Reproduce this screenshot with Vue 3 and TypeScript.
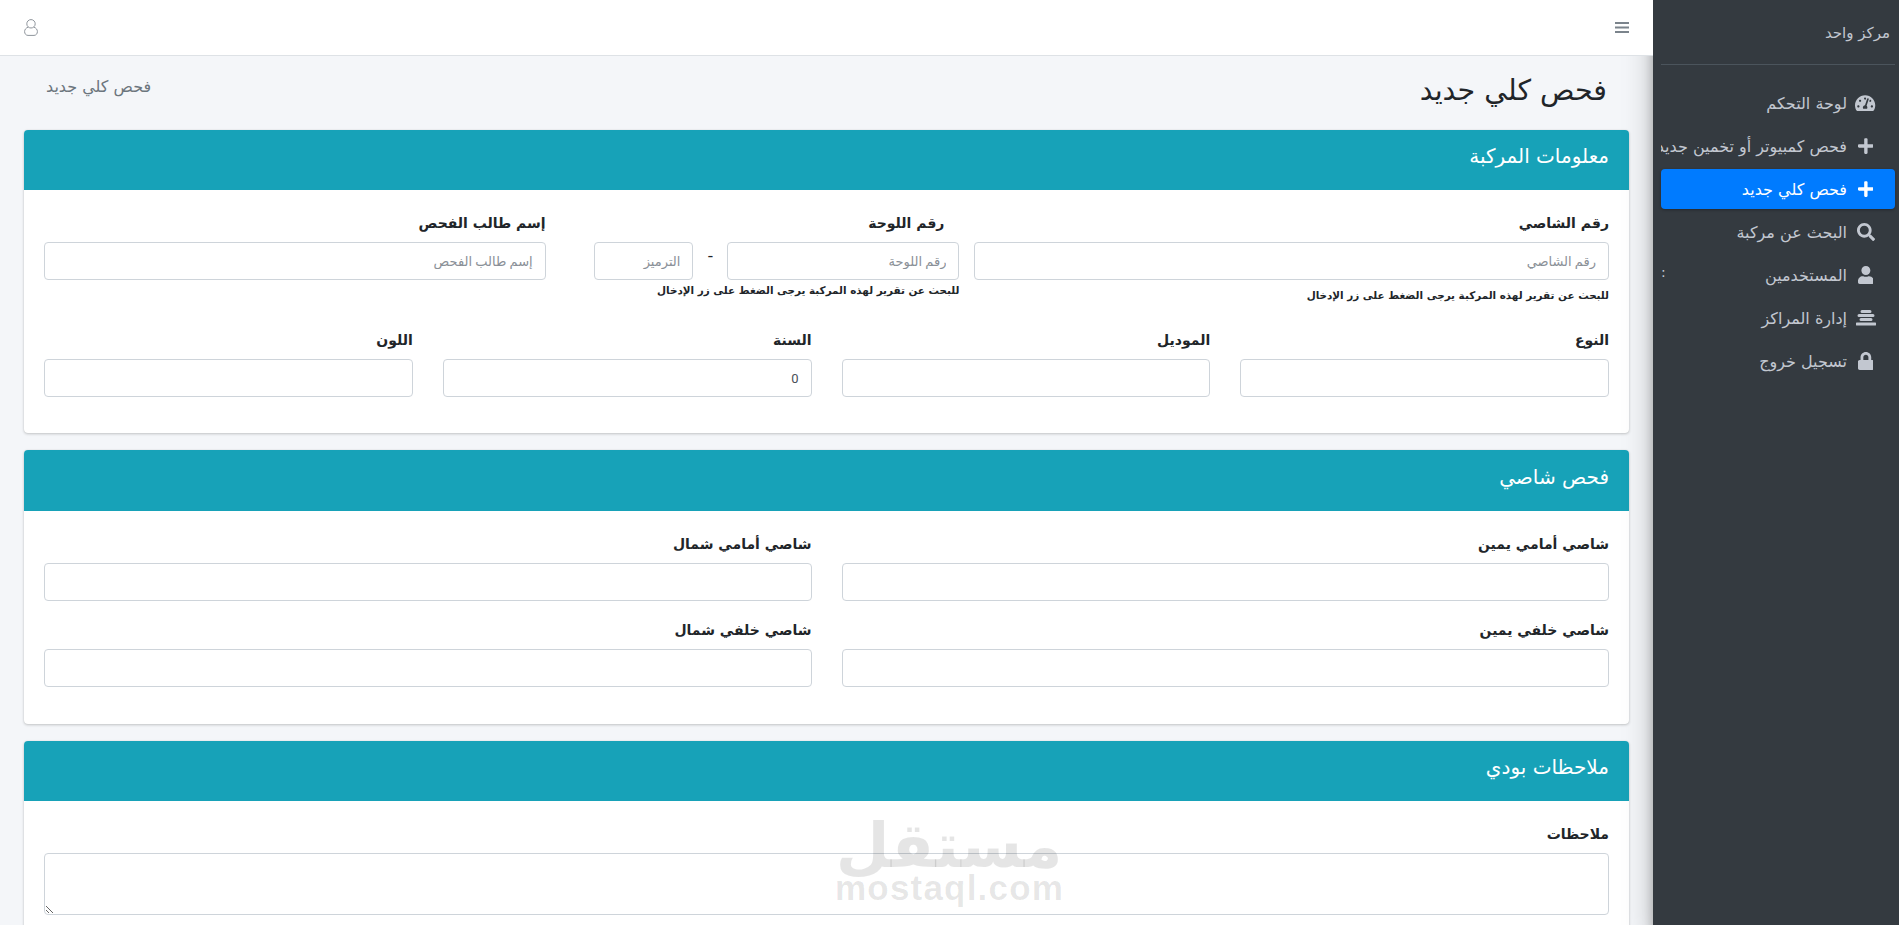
<script setup lang="ts">
import { computed } from 'vue'

type Icon = { view: string; d: string }
const icons: Record<string, Icon> = {
  gauge: { view: '0 0 576 512', d: 'M288 32C128.94 32 0 160.94 0 320c0 52.8 14.25 102.26 39.06 144.8 5.61 9.62 16.3 15.2 27.44 15.2h443c11.14 0 21.83-5.58 27.44-15.2C561.75 422.26 576 372.8 576 320c0-159.06-128.94-288-288-288zm0 64c14.71 0 26.58 10.13 30.32 23.65-1.11 2.26-2.64 4.23-3.45 6.67l-9.22 27.67c-5.13 3.49-10.97 6.01-17.64 6.01-17.67 0-32-14.33-32-32S270.33 96 288 96zM96 384c-17.67 0-32-14.33-32-32s14.33-32 32-32 32 14.33 32 32-14.33 32-32 32zm48-160c-17.67 0-32-14.33-32-32s14.33-32 32-32 32 14.33 32 32-14.33 32-32 32zm246.77-72.41l-61.33 184C343.13 347.33 352 364.54 352 384c0 11.72-3.38 22.55-8.88 32H232.88c-5.5-9.45-8.88-20.28-8.88-32 0-33.94 26.5-61.43 59.9-63.59l61.34-184.01c4.17-12.56 17.73-19.45 30.36-15.17 12.57 4.19 19.35 17.79 15.17 30.36zm14.66 57.2l15.52-46.55c3.47-1.29 7.13-2.23 11.05-2.23 17.67 0 32 14.33 32 32s-14.33 32-32 32c-11.38-.01-20.89-6.28-26.57-15.22zM480 384c-17.67 0-32-14.33-32-32s14.33-32 32-32 32 14.33 32 32-14.33 32-32 32z' },
  plus: { view: '0 0 448 512', d: 'M416 208H272V64c0-17.67-14.33-32-32-32h-32c-17.67 0-32 14.33-32 32v144H32c-17.67 0-32 14.33-32 32v32c0 17.67 14.33 32 32 32h144v144c0 17.67 14.33 32 32 32h32c17.67 0 32-14.33 32-32V304h144c17.67 0 32-14.33 32-32v-32c0-17.67-14.33-32-32-32z' },
  search: { view: '0 0 512 512', d: 'M505 442.7L405.3 343c-4.5-4.5-10.6-7-17-7H372c27.6-35.3 44-79.7 44-128C416 93.1 322.9 0 208 0S0 93.1 0 208s93.1 208 208 208c48.3 0 92.7-16.4 128-44v16.3c0 6.4 2.5 12.5 7 17l99.7 99.7c9.4 9.4 24.6 9.4 33.9 0l28.3-28.3c9.4-9.4 9.4-24.6.1-34zM208 336c-70.7 0-128-57.2-128-128 0-70.7 57.2-128 128-128 70.7 0 128 57.2 128 128 0 70.7-57.2 128-128 128z' },
  user: { view: '0 0 448 512', d: 'M224 256c70.7 0 128-57.3 128-128S294.7 0 224 0 96 57.3 96 128s57.3 128 128 128zm89.6 32h-16.7c-22.2 10.2-46.9 16-72.9 16s-50.6-5.8-72.9-16h-16.7C60.2 288 0 348.2 0 422.4V464c0 26.5 21.5 48 48 48h352c26.5 0 48-21.5 48-48v-41.6c0-74.2-60.2-134.4-134.4-134.4z' },
  center: { view: '0 -1 20 18', d: 'M6 0h8a1.500 1.500 0 0 1 0 3H6a1.500 1.500 0 0 1 0-3zM3 4h14a1.500 1.500 0 0 1 0 3H3a1.500 1.500 0 0 1 0-3zM5 8h10a1.500 1.500 0 0 1 0 3H5a1.500 1.500 0 0 1 0-3zM1 12.500h18a1.500 1.500 0 0 1 0 3H1a1.500 1.500 0 0 1 0-3z' },
  lock: { view: '0 0 448 512', d: 'M400 224h-24v-72C376 68.2 307.8 0 224 0S72 68.2 72 152v72H48c-26.5 0-48 21.5-48 48v192c0 26.5 21.5 48 48 48h352c26.5 0 48-21.5 48-48V272c0-26.5-21.5-48-48-48zm-104 0H152v-72c0-39.7 32.3-72 72-72s72 32.3 72 72v72z' }
}

const menu = computed(() => [
  { text: 'لوحة التحكم', icon: icons.gauge, active: false, extra: '' },
  { text: 'فحص كمبيوتر أو تخمين جديد', icon: icons.plus, active: false, extra: '' },
  { text: 'فحص كلي جديد', icon: icons.plus, active: true, extra: '' },
  { text: 'البحث عن مركبة', icon: icons.search, active: false, extra: '' },
  { text: 'المستخدمين', icon: icons.user, active: false, extra: ':' },
  { text: 'إدارة المراكز', icon: icons.center, active: false, extra: '' },
  { text: 'تسجيل خروج', icon: icons.lock, active: false, extra: '' }
])
const vehicle = ['النوع', 'الموديل', 'السنة', 'اللون']
const chassis = ['شاصي أمامي يمين', 'شاصي أمامي شمال', 'شاصي خلفي يمين', 'شاصي خلفي شمال']
const hint = 'للبحث عن تقرير لهذه المركبة يرجى الضغط على زر الإدخال'
</script>

<template>
  <div class="app">
    <aside class="sidebar">
      <div class="brand">مركز واحد</div>
      <nav class="menu">
        <a v-for="item in menu" :key="item.text" class="item" :class="{ active: item.active }">
          <span class="ico">
            <svg :viewBox="item.icon.view" class="ico-svg"><path :d="item.icon.d" fill="currentColor" /></svg>
          </span>
          <span class="item-text">{{ item.text }}</span>
          <span v-if="item.extra" class="extra">{{ item.extra }}</span>
        </a>
      </nav>
    </aside>

    <div class="wrapper">
      <header class="topbar">
        <svg class="burger" viewBox="0 0 14 11"><path d="M0 0h14v2H0zM0 4.500h14v2H0zM0 9h14v2H0z" fill="#7b848c" /></svg>
        <svg class="person" viewBox="0 0 14 17" fill="none" stroke="#8f959c" stroke-width="1">
          <circle cx="7" cy="4.800" r="4.200" />
          <path d="M4 8.200C1.900 9 .6 10.600.6 12.600c0 2.200 1.400 3.800 3.400 3.800h6c2 0 3.400-1.600 3.400-3.800 0-2-1.300-3.600-3.400-4.400" />
        </svg>
      </header>

      <main class="content">
        <div class="page-head">
          <h1 class="page-title">فحص كلي جديد</h1>
          <span class="crumb">فحص كلي جديد</span>
        </div>

        <section class="card">
          <h2 class="card-head">معلومات المركبة</h2>
          <div class="card-body">
            <div class="row first">
              <div class="col w5">
                <label>رقم الشاصي</label>
                <input class="ctl" placeholder="رقم الشاصي" />
                <small class="hint">{{ hint }}</small>
              </div>
              <div class="plate-col">
                <label class="plate-label">رقم اللوحة</label>
                <div class="plate">
                  <input class="ctl plate-no" placeholder="رقم اللوحة" />
                  <span class="dash">-</span>
                  <input class="ctl plate-sym" placeholder="الترميز" />
                </div>
                <small class="hint plate-hint">{{ hint }}</small>
              </div>
              <div class="col w4">
                <label>إسم طالب الفحص</label>
                <input class="ctl" placeholder="إسم طالب الفحص" />
              </div>
            </div>
            <div class="row">
              <div v-for="(name, i) in vehicle" :key="name" class="col w3 group">
                <label>{{ name }}</label>
                <input class="ctl" :value="i === 2 ? '0' : ''" />
              </div>
            </div>
          </div>
        </section>

        <section class="card tall">
          <h2 class="card-head">فحص شاصي</h2>
          <div class="card-body">
            <div class="row">
              <div v-for="name in chassis" :key="name" class="col w6 group">
                <label>{{ name }}</label>
                <input class="ctl" />
              </div>
            </div>
          </div>
        </section>

        <section class="card">
          <h2 class="card-head">ملاحظات بودي</h2>
          <div class="card-body">
            <label>ملاحظات</label>
            <textarea class="ctl area" rows="2"></textarea>
          </div>
        </section>

        <div class="watermark" aria-hidden="true">
          <div class="wm-ar">مستقل</div>
          <div class="wm-en">mostaql.com</div>
        </div>
      </main>
    </div>
  </div>
</template>

<style>
html, body { margin: 0; height: 100%; overflow: hidden; }
</style>

<style scoped>
.app {
  display: flex;
  direction: rtl;
  height: 925px;
  overflow: hidden;
  font-family: "DejaVu Sans", "Noto Sans", sans-serif;
  color: #212529;
  font-size: 14px;
}
.sidebar {
  width: 246px;
  flex: none;
  background: #343a40;
  color: #c2c7d0;
  box-shadow: 0 14px 28px rgba(0,0,0,.25), 0 10px 10px rgba(0,0,0,.22);
  position: relative;
  z-index: 1;
  box-sizing: border-box;
  padding: 0 4px;
}
.brand {
  height: 65px;
  box-sizing: border-box;
  line-height: 66px;
  font-size: 15px;
  padding-right: 5px;
  margin-left: 4px;
  border-bottom: 1px solid #4b545c;
}
.menu {
  display: flex;
  flex-direction: column;
  gap: 3px;
  margin: 18px 0 0 4px;
}
.item {
  height: 40px;
  display: flex;
  align-items: center;
  border-radius: 4px;
  font-size: 16px;
  color: #c2c7d0;
  white-space: nowrap;
  overflow: hidden;
  position: relative;
}
.item.active {
  background: #007bff;
  color: #fff;
  box-shadow: 0 1px 3px rgba(0,0,0,.3);
}
.ico {
  width: 29px;
  margin-right: 15px;
  margin-left: 4px;
  flex: none;
  display: flex;
  justify-content: center;
}
.ico-svg {
  height: 18px;
  width: auto;
}
.item-text { flex: none; }
.extra {
  position: absolute;
  left: 0;
  top: 9px;
  font-size: 14px;
  background: #343a40;
  padding-right: 3px;
}
.wrapper {
  flex: 1;
  min-width: 0;
  display: flex;
  flex-direction: column;
  background: #f4f6f9;
}
.topbar {
  position: relative;
  z-index: 2;
  height: 56px;
  flex: none;
  box-sizing: border-box;
  background: #fff;
  border-bottom: 1px solid #dee2e6;
  display: flex;
  align-items: center;
  justify-content: space-between;
  padding: 0 24px;
}
.burger { width: 14px; height: 11px; }
.person { width: 14px; height: 17px; }
.content {
  position: relative;
  padding: 0 24px;
  flex: 1;
  overflow: hidden;
}
.page-head {
  height: 74px;
  display: flex;
  align-items: center;
  justify-content: space-between;
  padding: 0 22px 6px 22px;
  box-sizing: border-box;
}
.page-title {
  margin: 0;
  font-size: 28.5px;
  font-weight: 400;
  color: #212529;
}
.crumb {
  font-size: 16px;
  color: #6c757d;
  margin-bottom: 8px;
}
.card {
  background: #fff;
  border-radius: 4px;
  box-shadow: 0 0 1px rgba(0,0,0,.125), 0 1px 3px rgba(0,0,0,.2);
  margin-bottom: 17px;
}
.card-head {
  margin: 0;
  height: 60px;
  box-sizing: border-box;
  padding: 0 20px 8px;
  display: flex;
  align-items: center;
  background: #17a2b8;
  color: #fff;
  font-size: 20px;
  font-weight: 400;
  border-radius: 4px 4px 0 0;
}
.card-body { padding: 20px; }
.tall .card-head { height: 61px; }
.tall .card-body { padding-bottom: 21px; }
.row {
  display: flex;
  flex-wrap: wrap;
  margin: 0 -15px;
}
.row.first { height: 117px; }
.col { padding: 0 15px; box-sizing: border-box; }
.w3 { width: 25%; }
.w4 { width: 33.3333%; }
.w5 { width: 41.6667%; }
.w6 { width: 50%; }
.group { margin-bottom: 16px; }
label {
  display: block;
  height: 24px;
  line-height: 26px;
  margin-bottom: 8px;
  font-size: 14px;
  font-weight: 700;
  color: #212529;
}
.ctl {
  display: block;
  width: 100%;
  height: 38px;
  box-sizing: border-box;
  padding: 6px 12px;
  border: 1px solid #ced4da;
  border-radius: 4px;
  background: #fff;
  font-family: "Roboto", "DejaVu Sans", sans-serif;
  font-size: 13px;
  color: #495057;
  direction: rtl;
  outline: none;
}
.ctl::placeholder { color: #8a9097; opacity: 1; }
.hint {
  display: block;
  margin-top: 5px;
  font-size: 10.4px;
  line-height: 20px;
  color: #212529;
  font-weight: 700;
  white-space: nowrap;
}
.plate-col {
  width: 25%;
  box-sizing: border-box;
}
.plate-label { padding-right: 15px; }
.plate { display: flex; align-items: flex-start; }
.plate-no { width: 232px; flex: none; }
.dash {
  width: 34px;
  flex: none;
  text-align: center;
  line-height: 28px;
  font-size: 16px;
}
.plate-sym { width: 99px; flex: none; }
.plate-hint { margin-top: 0; }
.area {
  height: 62px;
  resize: vertical;
}
.watermark {
  position: absolute;
  left: 835px;
  top: 763px;
  width: 228px;
  direction: ltr;
  text-align: center;
  pointer-events: none;
  color: rgba(0,0,0,.1);
  font-weight: 700;
}
.wm-ar {
  font-size: 62px;
  line-height: 54px;
  direction: rtl;
}
.wm-en {
  font-family: "Liberation Sans", Arial, sans-serif;
  font-size: 35px;
  font-weight: 700;
  letter-spacing: 1.2px;
  line-height: 30px;
  white-space: nowrap;
}
</style>
